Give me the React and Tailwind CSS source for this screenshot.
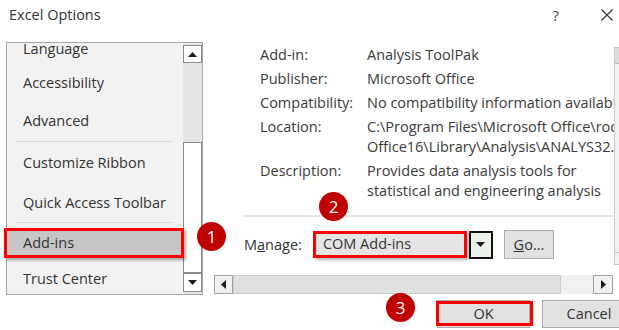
import React from 'react';

const font = "font-['Segoe_UI','Open_Sans',sans-serif]";

function Badge({ n, className }) {
  return (
    <div
      className={`absolute flex h-[29px] w-[29px] items-center justify-center rounded-full bg-[#c00000] text-[17px] text-white ${className}`}
    >
      {n}
    </div>
  );
}

function Tri({ dir }) {
  const d = {
    up: 'M0 5 L4.5 0 L9 5 Z',
    down: 'M0 0 L9 0 L4.5 5 Z',
  }[dir];
  return (
    <svg width="9" height="5" viewBox="0 0 9 5">
      <path d={d} fill="#1a1a1a" />
    </svg>
  );
}

function HTri({ dir }) {
  const d = dir === 'left' ? 'M5 0 L5 9 L0 4.5 Z' : 'M0 0 L0 9 L5 4.5 Z';
  return (
    <svg width="5" height="9" viewBox="0 0 5 9">
      <path d={d} fill="#1a1a1a" />
    </svg>
  );
}

function NavList() {
  return (
    <div className="flex h-[253px] w-[197px] border border-[#a6a6a6] bg-[#f2f2f2]">
      <div className="relative w-[176px] overflow-visible">
        <div className="h-full overflow-hidden">
          <div className="mt-[-11px] text-[14.5px] text-[#333]">
            <div className="flex h-[34px] items-center pl-[16px]">Language</div>
            <div className="flex h-[34px] items-center pl-[16px]">Accessibility</div>
            <div className="flex h-[41px] items-center pl-[16px]">Advanced</div>
            <div className="ml-[8px] mr-[10px] h-px bg-[#d9d9d9]" />
            <div className="flex h-[42px] items-center pl-[16px]">Customize Ribbon</div>
            <div className="flex h-[38px] items-center pl-[16px]">Quick Access Toolbar</div>
            <div className="ml-[8px] mr-[10px] h-px bg-[#d9d9d9]" />
            <div className="h-[36px]" />
            <div className="flex h-[40px] items-center pl-[16px]">Trust Center</div>
          </div>
        </div>
        {/* selected item, drawn over the list so its red frame can overhang the border */}
        <div className="absolute left-[-3px] top-[185px] flex h-[30px] w-[180px] items-center border-[3px] border-[#ff0000] bg-[#c6c6c6] pl-[16px] text-[14.5px] text-[#333] shadow-[2px_2px_3px_rgba(0,0,0,0.35)]">
          Add-ins
        </div>
      </div>
      <div className="flex w-[19px] flex-col bg-[#e6e6e6] pt-[2px] pb-[1px]">
        <div className="flex h-[18px] items-center justify-center border border-[#8a8a8a] bg-white">
          <Tri dir="up" />
        </div>
        <div className="h-[79px]" />
        <div className="h-[131px] border border-[#8a8a8a] bg-white" />
        <div className="flex h-[19px] items-center justify-center border border-[#8a8a8a] bg-white">
          <Tri dir="down" />
        </div>
      </div>
    </div>
  );
}

function Row({ label, lines }) {
  return (
    <div className="flex">
      <div className="w-[107px] shrink-0">{label}</div>
      <div className="whitespace-nowrap">
        {lines.map((l) => (
          <div key={l}>{l}</div>
        ))}
      </div>
    </div>
  );
}

export default function App() {
  return (
    <div className={`relative h-[330px] w-[619px] overflow-hidden bg-white text-[#333] ${font}`}>
      <div className="flex h-[30px] items-center pl-[9px] text-[14.5px]">
        <span>Excel Options</span>
        <span className="ml-auto mr-[42px] text-[15px] text-[#444]">?</span>
        <svg className="mr-[6px]" width="12" height="12" viewBox="0 0 12 12">
          <path d="M0.5 0.5 L11.5 11.5 M11.5 0.5 L0.5 11.5" stroke="#333" strokeWidth="1.1" />
        </svg>
      </div>

      <div className="mt-[12px] flex">
        <div className="ml-[6px]">
          <NavList />
        </div>

        <div className="ml-[11px] flex w-[405px] flex-col">
          <div className="flex h-[233px]">
            <div className="w-[400px] overflow-hidden">
              <div className="mt-[3px] flex flex-col gap-[4px] pl-[46px] text-[14.5px] leading-[20px] text-[#3a3a3a]">
                <Row label="Add-in:" lines={['Analysis ToolPak']} />
                <Row label="Publisher:" lines={['Microsoft Office']} />
                <Row label="Compatibility:" lines={['No compatibility information available']} />
                <Row
                  label="Location:"
                  lines={['C:\\Program Files\\Microsoft Office\\root\\', 'Office16\\Library\\Analysis\\ANALYS32.XLL']}
                />
                <Row
                  label="Description:"
                  lines={['Provides data analysis tools for', 'statistical and engineering analysis']}
                />
              </div>
              <div className="ml-[29px] mt-[14px] h-[2px] bg-[#e6e6e6]" />
              <div className="ml-[30px] mt-[13px] flex items-center text-[14.5px]">
                <span className="mr-[11px]">
                  M<span className="underline">a</span>nage:
                </span>
                <div className="relative flex h-[28px]">
                  <div className="flex h-[27px] w-[154px] items-center border-[3px] border-[#ff0000] bg-[#e5e5e5] pl-[7px] shadow-[2px_2px_3px_rgba(0,0,0,0.3)]">
                    COM Add-ins
                  </div>
                  <div className="ml-[2px] flex h-[28px] w-[24px] items-center justify-center border-2 border-[#111] bg-[#eaf2ec]">
                    <Tri dir="down" />
                  </div>
                </div>
                <div className="ml-[11px] flex h-[29px] w-[50px] items-center justify-center border border-[#adadad] bg-[#e1e1e1]">
                  <span>
                    <span className="underline">G</span>o…
                  </span>
                </div>
              </div>
            </div>
            <div className="mt-[5px] flex h-[218px] flex-1 flex-col border border-r-0 border-[#c9c9c9] bg-[#f0f0f0]">
              <div className="h-[16px] border-b border-[#b5b5b5] bg-[#dcdcdc]" />
              <div className="flex-1" />
              <div className="h-[12px] border-t border-[#c9c9c9]" />
            </div>
          </div>

          <div className="flex h-[19px] w-[399px] bg-[#f0f0f0]">
            <div className="flex w-[19px] items-center justify-center border border-[#a0a0a0] bg-[#f0f0f0]">
              <HTri dir="left" />
            </div>
            <div className="w-[328px] border border-[#cdcdcd] bg-[#e0e0e0]" />
            <div className="flex-1" />
            <div className="flex w-[20px] items-center justify-center border border-[#a0a0a0] bg-[#f0f0f0]">
              <HTri dir="right" />
            </div>
          </div>

          <div className="ml-[223px] mt-[6px] flex gap-[12px] text-[14.5px]">
            <div className="relative flex h-[28px] w-[93px] shrink-0 items-center justify-center border border-[#adadad] bg-[#e1e1e1]">
              OK
              <div className="absolute left-[-2px] top-0 h-[25px] w-[97px] border-[3px] border-[#ff0000]" />
            </div>
            <div className="flex h-[28px] w-[94px] shrink-0 items-center justify-center border border-[#adadad] bg-[#e1e1e1]">
              Cancel
            </div>
          </div>
        </div>
      </div>

      <Badge n="1" className="left-[197px] top-[222px]" />
      <Badge n="2" className="left-[319px] top-[192px]" />
      <Badge n="3" className="left-[386px] top-[293px]" />
    </div>
  );
}
